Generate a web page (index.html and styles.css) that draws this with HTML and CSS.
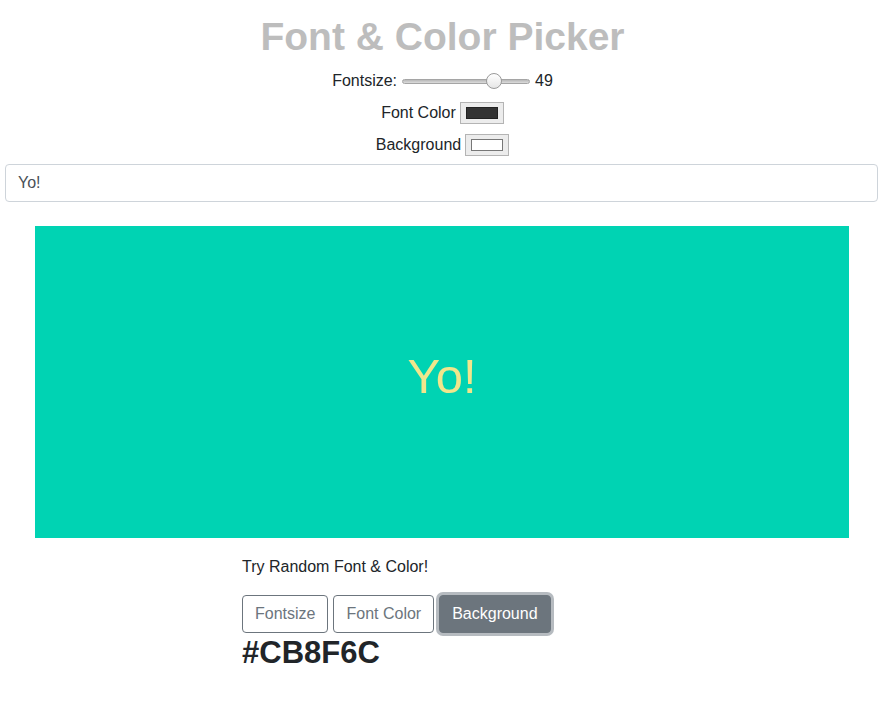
FILE: index.html
```html
<!DOCTYPE html>
<html>
<head>
<meta charset="utf-8">
<link rel="stylesheet" href="styles.css">
</head>
<body>
<h1 class="title">Font &amp; Color Picker</h1>
<div class="row first">
  <label>Fontsize:</label>
  <div class="slider"><div class="track"></div><div class="thumb"></div></div>
  <span>49</span>
</div>
<div class="row">
  <label>Font Color</label>
  <div class="swatch"><div class="swatch-inner dark"></div></div>
</div>
<div class="row">
  <label>Background</label>
  <div class="swatch"><div class="swatch-inner light"></div></div>
</div>
<div class="input">Yo!</div>
<div class="preview">Yo!</div>
<div class="random">
  <p class="try">Try Random Font &amp; Color!</p>
  <div class="buttons">
    <button class="btn">Fontsize</button>
    <button class="btn">Font Color</button>
    <button class="btn active">Background</button>
  </div>
  <div class="hex">#CB8F6C</div>
</div>
</body>
</html>
```
FILE: styles.css
```css
* { box-sizing: border-box; }
body {
  margin: 0;
  font-family: "Liberation Sans", Arial, sans-serif;
  color: #212529;
  font-size: 16px;
  background: #fff;
}
.title {
  margin: 14px 0 0;
  text-align: center;
  font-size: 39px;
  line-height: 46px;
  font-weight: bold;
  color: #bdbdbd;
}
.row {
  display: flex;
  justify-content: center;
  align-items: center;
  gap: 4px;
  height: 32px;
}
.row.first { margin-top: 5px; }
.slider {
  position: relative;
  width: 128px;
  height: 18px;
  margin: 0 1px;
}
.track {
  position: absolute;
  left: 0; right: 0; top: 7px;
  height: 5px;
  border-radius: 3px;
  background: linear-gradient(#b8b8b8, #dcdcdc);
  border: 1px solid #a5a5a5;
}
.thumb {
  position: absolute;
  left: 84px; top: 1px;
  width: 16px; height: 16px;
  border-radius: 50%;
  background: linear-gradient(#ffffff, #e6e6e6);
  border: 1px solid #9a9a9a;
}
.swatch {
  width: 44px;
  height: 22px;
  border: 1px solid #b4b4b4;
  background: #ececec;
  padding: 4px 5px;
}
.swatch-inner { width: 100%; height: 100%; }
.swatch-inner.dark { background: #333; border: 1px solid #222; }
.swatch-inner.light { background: #fff; border: 1px solid #777; }
.input {
  margin: 3px 7px 0 5px;
  height: 38px;
  border: 1px solid #ced4da;
  border-radius: 4px;
  padding: 0 12px;
  display: flex;
  align-items: center;
  color: #495057;
}
.preview {
  margin: 24px 36px 0 35px;
  height: 312px;
  background: #00d3b3;
  color: #f0e68c;
  font-size: 49px;
  display: flex;
  align-items: center;
  justify-content: center;
  padding-bottom: 12px;
}
.random { padding-left: 242px; }
.try { margin: 19px 0 0; line-height: 20px; }
.buttons { display: flex; gap: 5px; margin-top: 18px; }
.btn {
  font-family: "Liberation Sans", Arial, sans-serif;
  font-size: 16px;
  height: 38px;
  padding: 0 12px;
  border: 1px solid #6c757d;
  border-radius: 4px;
  background: #fff;
  color: #6c757d;
}
.btn.active {
  background: #6c757d;
  color: #fff;
  box-shadow: 0 0 0 3px #b6bbc0;
}
.hex {
  font-size: 31px;
  font-weight: bold;
  line-height: 36px;
  margin-top: 2px;
}
```
